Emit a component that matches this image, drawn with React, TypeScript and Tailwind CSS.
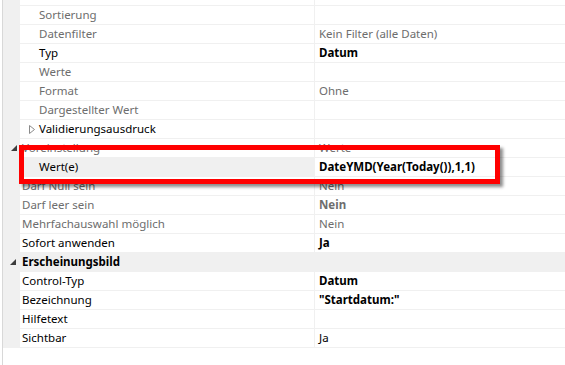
import React from 'react';

type Row = {
  name: string;
  value?: string;
  level: number; // 0 = category, 1 = property, 2 = sub property
  dim?: boolean;
  bold?: boolean;
  valueDim?: boolean;
  expander?: 'open' | 'closed';
  selected?: boolean;
};

const rows: Row[] = [
  { name: 'Sortierung', level: 2, dim: true },
  { name: 'Datenfilter', value: 'Kein Filter (alle Daten)', level: 2, dim: true, valueDim: true },
  { name: 'Typ', value: 'Datum', level: 2, bold: true },
  { name: 'Werte', level: 2, dim: true },
  { name: 'Format', value: 'Ohne', level: 2, dim: true, valueDim: true },
  { name: 'Dargestellter Wert', level: 2, dim: true },
  { name: 'Validierungsausdruck', level: 2, expander: 'closed' },
  { name: 'Voreinstellung', value: 'Werte', level: 1, dim: true, valueDim: true, expander: 'open' },
  { name: 'Wert(e)', value: 'DateYMD(Year(Today()),1,1)', level: 2, bold: true, selected: true },
  { name: 'Darf Null sein', value: 'Nein', level: 1, dim: true, valueDim: true },
  { name: 'Darf leer sein', value: 'Nein', level: 1, dim: true, valueDim: true, bold: true },
  { name: 'Mehrfachauswahl möglich', value: 'Nein', level: 1, dim: true, valueDim: true },
  { name: 'Sofort anwenden', value: 'Ja', level: 1, bold: true },
  { name: 'Erscheinungsbild', level: 0, expander: 'open' },
  { name: 'Control-Typ', value: 'Datum', level: 1, bold: true },
  { name: 'Bezeichnung', value: '"Startdatum:"', level: 1, bold: true },
  { name: 'Hilfetext', level: 1 },
  { name: 'Sichtbar', value: 'Ja', level: 1 },
];

const OpenArrow = () => (
  <svg width="6" height="6" viewBox="0 0 6 6" className="shrink-0">
    <polygon points="6,0 6,6 0,6" fill="#3c3c3c" />
  </svg>
);

const ClosedArrow = () => (
  <svg width="6" height="9" viewBox="0 0 6 9" className="shrink-0">
    <polygon points="0.5,0.5 5.5,4.5 0.5,8.5" fill="none" stroke="#8a8a8a" strokeWidth="1" />
  </svg>
);

const PropertyRow: React.FC<{ row: Row }> = ({ row }) => {
  if (row.level === 0) {
    return (
      <div className="flex h-[19px] bg-[#f0f0f0] border-b border-[#f0f0f0]">
        <div className="w-[17px] flex items-center justify-end pr-[4px]">
          <OpenArrow />
        </div>
        <div className="pl-[2px] flex items-center font-bold text-black">{row.name}</div>
      </div>
    );
  }

  const indent = row.level === 2 ? 'pl-[19px]' : 'pl-[2px]';
  const nameColor = row.dim ? 'text-[#6d6d6d]' : 'text-black';
  const valueColor = row.valueDim ? 'text-[#6d6d6d]' : 'text-black';

  return (
    <div className="flex h-[19px]">
      <div className="w-[17px] bg-[#f0f0f0] relative">
        {row.expander === 'open' && (
          <div className="absolute left-[8px] top-[6px]">
            <OpenArrow />
          </div>
        )}
      </div>
      <div
        className={`w-[295px] border-b border-r border-[#f0f0f0] flex items-center relative ${indent} ${
          row.selected ? 'bg-[#f0f0f0]' : 'bg-white'
        }`}
      >
        {row.expander === 'closed' && (
          <div className="absolute left-[9px] top-[5px]">
            <ClosedArrow />
          </div>
        )}
        <span className={`whitespace-nowrap ${nameColor}`}>{row.name}</span>
      </div>
      <div className="flex-1 border-b border-[#f0f0f0] flex items-center pl-[4px] bg-white">
        <span className={`whitespace-nowrap ${valueColor} ${row.bold ? 'font-bold' : ''}`}>{row.value}</span>
      </div>
    </div>
  );
};

export default function App() {
  return (
    <div
      className="w-[565px] h-[365px] overflow-hidden bg-white relative text-[11.5px] leading-none"
      style={{ fontFamily: '"Segoe UI", "Noto Sans", "Open Sans", sans-serif' }}
    >
      <div className="ml-[2px] border-l border-[#d8d8d8] h-full">
        {/* partially scrolled-out row */}
        <div className="flex h-[6px]">
          <div className="w-[17px] bg-[#f0f0f0]" />
          <div className="w-[295px] border-b border-r border-[#f0f0f0]" />
          <div className="flex-1 border-b border-[#f0f0f0]" />
        </div>
        {rows.map((r) => (
          <PropertyRow key={r.name} row={r} />
        ))}
      </div>

      {/* red highlight box */}
      <div className="absolute left-[19px] top-[145px] w-[481px] h-[39px] border-[5px] border-[#ff0000] shadow-[3px_3px_3px_rgba(0,0,0,0.45)]" />
    </div>
  );
}
